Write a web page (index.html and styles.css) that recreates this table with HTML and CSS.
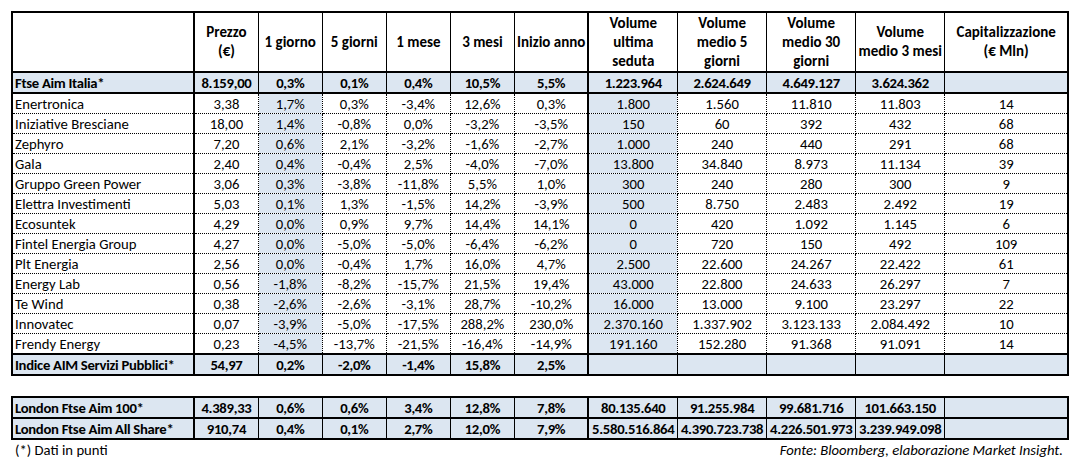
FILE: index.html
```html
<!DOCTYPE html>
<html lang="it">
<head>
<meta charset="utf-8">
<title>AIM Servizi Pubblici</title>
<link rel="stylesheet" href="styles.css">
</head>
<body>
<div class="page">
  <table class="grid">
    <colgroup>
      <col class="w-name"><col class="w-p"><col class="w-p"><col class="w-p"><col class="w-p"><col class="w-p"><col class="w-ia"><col class="w-v"><col class="w-v"><col class="w-v"><col class="w-v"><col class="w-cap">
    </colgroup>
    <tr class="hdr">
      <th class="name"></th>
      <th>Prezzo<br>(€)</th>
      <th>1 giorno</th>
      <th>5 giorni</th>
      <th>1 mese</th>
      <th>3 mesi</th>
      <th class="split">Inizio anno</th>
      <th>Volume<br>ultima<br>seduta</th>
      <th>Volume<br>medio 5<br>giorni</th>
      <th>Volume<br>medio 30<br>giorni</th>
      <th>Volume<br>medio 3 mesi</th>
      <th>Capitalizzazione<br>(€ Mln)</th>
    </tr>
    <tr class="idx">
      <td class="name">Ftse Aim Italia*</td><td>8.159,00</td><td>0,3%</td><td>0,1%</td><td>0,4%</td><td>10,5%</td><td class="split">5,5%</td><td>1.223.964</td><td>2.624.649</td><td>4.649.127</td><td>3.624.362</td><td></td>
    </tr>
    <tr class="row"><td class="name">Enertronica</td><td>3,38</td><td class="hl">1,7%</td><td>0,3%</td><td>-3,4%</td><td>12,6%</td><td class="split">0,3%</td><td class="hl">1.800</td><td>1.560</td><td>11.810</td><td>11.803</td><td>14</td></tr>
    <tr class="row"><td class="name">Iniziative Bresciane</td><td>18,00</td><td class="hl">1,4%</td><td>-0,8%</td><td>0,0%</td><td>-3,2%</td><td class="split">-3,5%</td><td class="hl">150</td><td>60</td><td>392</td><td>432</td><td>68</td></tr>
    <tr class="row"><td class="name">Zephyro</td><td>7,20</td><td class="hl">0,6%</td><td>2,1%</td><td>-3,2%</td><td>-1,6%</td><td class="split">-2,7%</td><td class="hl">1.000</td><td>240</td><td>440</td><td>291</td><td>68</td></tr>
    <tr class="row"><td class="name">Gala</td><td>2,40</td><td class="hl">0,4%</td><td>-0,4%</td><td>2,5%</td><td>-4,0%</td><td class="split">-7,0%</td><td class="hl">13.800</td><td>34.840</td><td>8.973</td><td>11.134</td><td>39</td></tr>
    <tr class="row"><td class="name">Gruppo Green Power</td><td>3,06</td><td class="hl">0,3%</td><td>-3,8%</td><td>-11,8%</td><td>5,5%</td><td class="split">1,0%</td><td class="hl">300</td><td>240</td><td>280</td><td>300</td><td>9</td></tr>
    <tr class="row"><td class="name">Elettra Investimenti</td><td>5,03</td><td class="hl">0,1%</td><td>1,3%</td><td>-1,5%</td><td>14,2%</td><td class="split">-3,9%</td><td class="hl">500</td><td>8.750</td><td>2.483</td><td>2.492</td><td>19</td></tr>
    <tr class="row"><td class="name">Ecosuntek</td><td>4,29</td><td class="hl">0,0%</td><td>0,9%</td><td>9,7%</td><td>14,4%</td><td class="split">14,1%</td><td class="hl">0</td><td>420</td><td>1.092</td><td>1.145</td><td>6</td></tr>
    <tr class="row"><td class="name">Fintel Energia Group</td><td>4,27</td><td class="hl">0,0%</td><td>-5,0%</td><td>-5,0%</td><td>-6,4%</td><td class="split">-6,2%</td><td class="hl">0</td><td>720</td><td>150</td><td>492</td><td>109</td></tr>
    <tr class="row"><td class="name">Plt Energia</td><td>2,56</td><td class="hl">0,0%</td><td>-0,4%</td><td>1,7%</td><td>16,0%</td><td class="split">4,7%</td><td class="hl">2.500</td><td>22.600</td><td>24.267</td><td>22.422</td><td>61</td></tr>
    <tr class="row"><td class="name">Energy Lab</td><td>0,56</td><td class="hl">-1,8%</td><td>-8,2%</td><td>-15,7%</td><td>21,5%</td><td class="split">19,4%</td><td class="hl">43.000</td><td>22.800</td><td>24.633</td><td>26.297</td><td>7</td></tr>
    <tr class="row"><td class="name">Te Wind</td><td>0,38</td><td class="hl">-2,6%</td><td>-2,6%</td><td>-3,1%</td><td>28,7%</td><td class="split">-10,2%</td><td class="hl">16.000</td><td>13.000</td><td>9.100</td><td>23.297</td><td>22</td></tr>
    <tr class="row"><td class="name">Innovatec</td><td>0,07</td><td class="hl">-3,9%</td><td>-5,0%</td><td>-17,5%</td><td>288,2%</td><td class="split">230,0%</td><td class="hl">2.370.160</td><td>1.337.902</td><td>3.123.133</td><td>2.084.492</td><td>10</td></tr>
    <tr class="row"><td class="name">Frendy Energy</td><td>0,23</td><td class="hl">-4,5%</td><td>-13,7%</td><td>-21,5%</td><td>-16,4%</td><td class="split">-14,9%</td><td class="hl">191.160</td><td>152.280</td><td>91.368</td><td>91.091</td><td>14</td></tr>
    <tr class="idx">
      <td class="name">Indice AIM Servizi Pubblici*</td><td>54,97</td><td>0,2%</td><td>-2,0%</td><td>-1,4%</td><td>15,8%</td><td class="split">2,5%</td><td></td><td></td><td></td><td></td><td></td>
    </tr>
  </table>

  <table class="grid london">
    <colgroup>
      <col class="w-name"><col class="w-p"><col class="w-p"><col class="w-p"><col class="w-p"><col class="w-p"><col class="w-ia"><col class="w-v"><col class="w-v"><col class="w-v"><col class="w-v"><col class="w-cap">
    </colgroup>
    <tr class="idx">
      <td class="name">London Ftse Aim 100*</td><td>4.389,33</td><td>0,6%</td><td>0,6%</td><td>3,4%</td><td>12,8%</td><td class="split">7,8%</td><td>80.135.640</td><td>91.255.984</td><td>99.681.716</td><td>101.663.150</td><td></td>
    </tr>
    <tr class="idx">
      <td class="name">London Ftse Aim All Share*</td><td>910,74</td><td>0,4%</td><td>0,1%</td><td>2,7%</td><td>12,0%</td><td class="split">7,9%</td><td>5.580.516.864</td><td>4.390.723.738</td><td>4.226.501.973</td><td>3.239.949.098</td><td></td>
    </tr>
  </table>

  <div class="notes">
    <span class="note">(*) Dati in punti</span>
    <span class="source">Fonte: Bloomberg, elaborazione Market Insight.</span>
  </div>
</div>
</body>
</html>
```

FILE: styles.css
```css
html, body {
  margin: 0;
  padding: 0;
  background: #ffffff;
}

body {
  font-family: Carlito, Calibri, Lato, "Open Sans", sans-serif;
  font-size: 14.7px;
  color: #000000;
}

.page {
  padding: 11px 0 0 11px;
  width: 1058px;
}

.grid {
  border-collapse: collapse;
  table-layout: fixed;
  width: 1058px;
  border: 2px solid #000;
}

.w-name { width: 182px; }
.w-p { width: 64px; }
.w-ia { width: 74px; }
.w-v { width: 89px; }
.w-cap { width: 123px; }

.grid th,
.grid td {
  padding: 0 1px;
  text-align: center;
  vertical-align: middle;
  white-space: nowrap;
  line-height: 18px;
  overflow: hidden;
}

.hdr th {
  height: 58px;
  font-size: 15px;
  font-weight: bold;
  border: 1px solid #000;
  border-bottom: 2px solid #000;
  line-height: 19px;
}

.idx td {
  height: 19px;
  font-weight: bold;
  letter-spacing: -0.3px;
  background: #dce6f1;
  border: 1px solid #000;
  border-top: 2px solid #000;
  border-bottom: 2px solid #000;
}

.row td {
  height: 19px;
  border: 1px dotted #000;
}

.grid .name {
  text-align: left;
  padding-left: 2px;
  border-right: 2px solid #000;
}

.grid .split {
  border-right: 2px solid #000;
}

.row .hl {
  background: #dce6f1;
}

.london {
  margin-top: 20px;
}

.notes {
  display: flex;
  justify-content: space-between;
  align-items: baseline;
  padding: 1px 6px 0 4px;
  line-height: 18px;
}

.source {
  font-style: italic;
}
```
